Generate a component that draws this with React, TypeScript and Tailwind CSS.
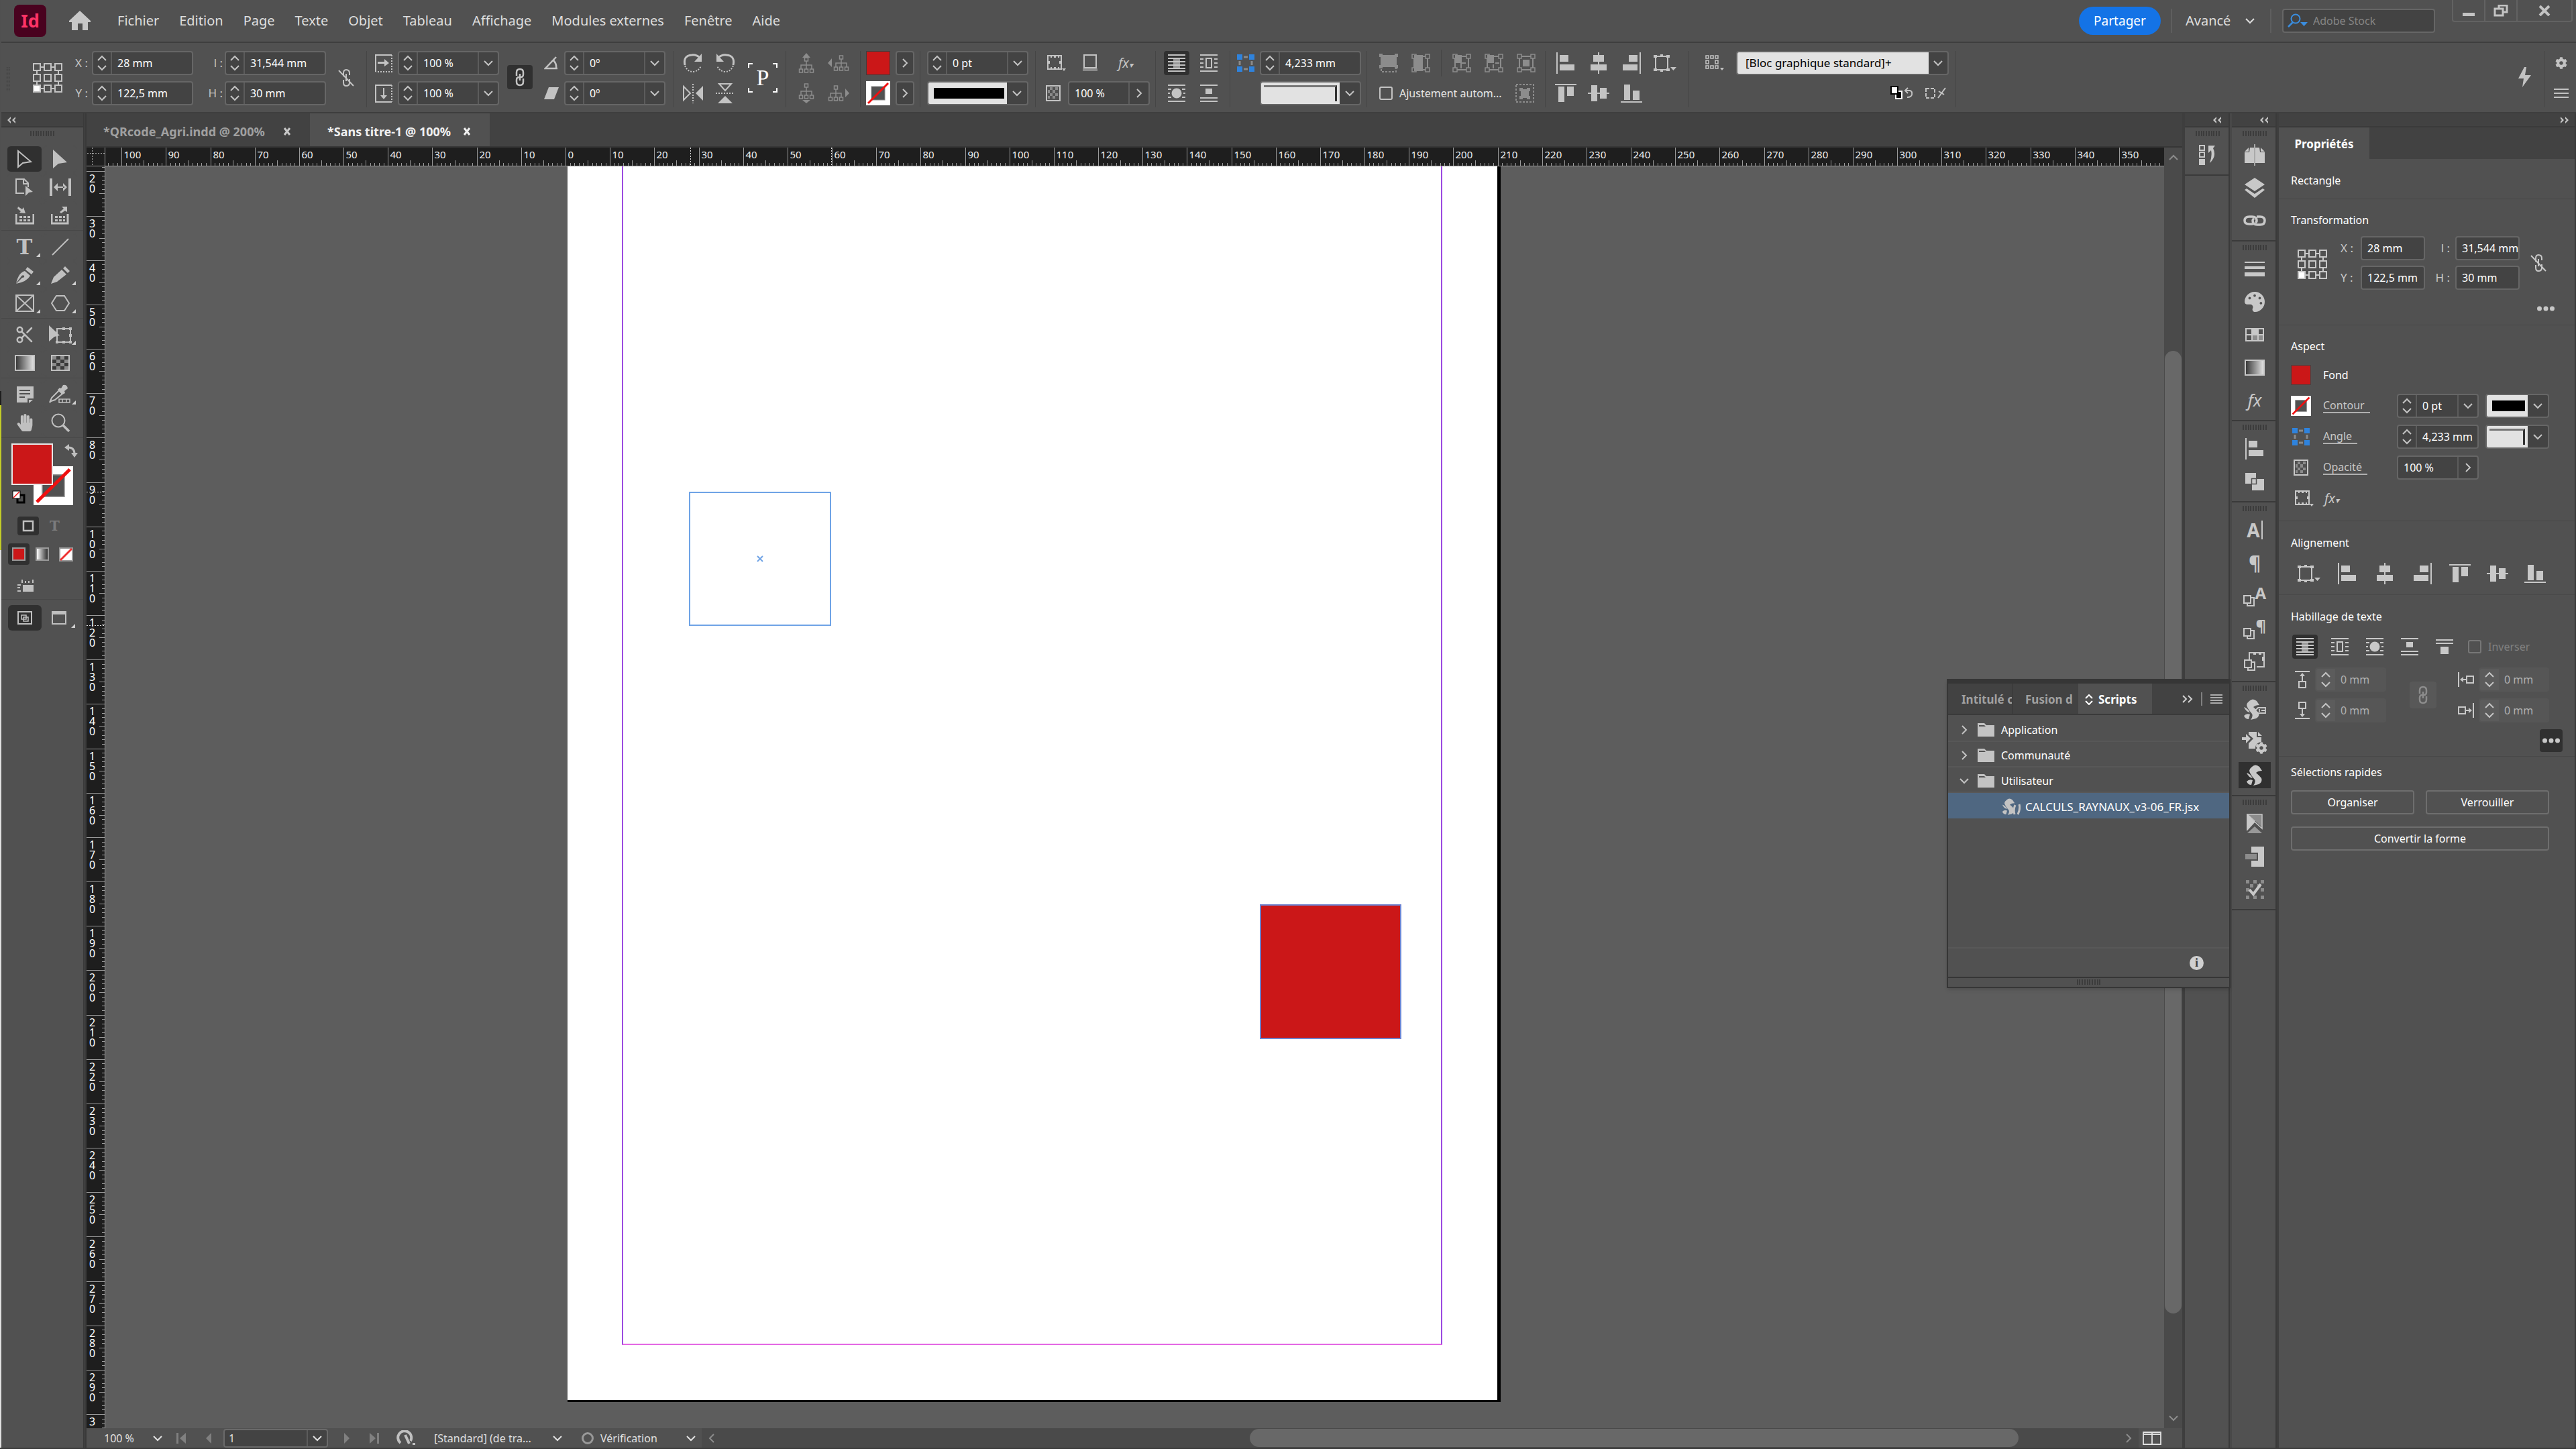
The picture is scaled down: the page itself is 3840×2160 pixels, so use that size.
import React from "react";
import { clsx } from "clsx";
import { Scissors } from "lucide-react";
import { FaHandPaper, FaPalette, FaCog } from "react-icons/fa";

/* ---------- Icon drawings ---------- */

const line = { fill: "none", stroke: "currentColor", strokeWidth: 2 };

const scriptShape = (
  <>
    <path d="M9 3 Q14 -2 20 3 L24 9 Q18 9 15 12 Q20 16 23 20 Q25 26 19 29 L11 31 Q15 26 13 22 Q6 14 5 9 Q6 5 9 3Z" />
    <path d="M1 12 Q6 13 10 20 Q4 19 1 12Z M1 25 Q5 21 10 23 L8 30 Q3 30 1 25Z" />
  </>
);

const stackShape = (
  <>
    <path d="M1 16 H11 V27 H1Z" {...line} />
    <path d="M12 19 H16 V31 H6 V28" {...line} />
  </>
);

const treeShape = (
  <>
    <path d="M12 6 V12 M4 18 V12 H20 V18 M12 12 V18" {...line} strokeWidth={1.5} />
    <path d="M9.5 1 H14.5 V6 H9.5Z M1.5 18 H6.5 V23 H1.5Z M9.5 18 H14.5 V23 H9.5Z M17.5 18 H22.5 V23 H17.5Z" {...line} strokeWidth={1.5} />
  </>
);

const frameShape = (
  <>
    <path d="M4 4 H24 V24 H4Z" {...line} />
    <path d="M1 1 H7 V7 H1Z M21 1 H27 V7 H21Z M1 21 H7 V27 H1Z M21 21 H27 V27 H21Z" {...line} strokeWidth={1.5} fill="#515151" />
  </>
);

const checker = (
  <path d="M2 2h6v5h-6z M14 2h6v5h-6z M8 7h6v5h-6z M20 7h6v5h-6z M2 12h6v5h-6z M14 12h6v5h-6z M8 17h6v5h-6z M20 17h6v5h-6z" opacity=".6" />
);

const icons: Record<string, { w: number; h: number; body: React.ReactNode }> = {
  chevronDown: { w: 16, h: 10, body: <path d="M2 2 L8 8 L14 2" {...line} /> },
  chevronUp: { w: 16, h: 10, body: <path d="M2 8 L8 2 L14 8" {...line} /> },
  chevronRight: { w: 10, h: 16, body: <path d="M2 2 L8 8 L2 14" {...line} /> },
  chevronLeft: { w: 10, h: 16, body: <path d="M8 2 L2 8 L8 14" {...line} /> },
  collapse: { w: 14, h: 10, body: <path d="M6 0 V3 L4 5 L6 7 V10 L1 5Z M13 0 V3 L11 5 L13 7 V10 L8 5Z" /> },
  expand: { w: 14, h: 10, body: <path d="M1 0 V3 L3 5 L1 7 V10 L6 5Z M8 0 V3 L10 5 L8 7 V10 L13 5Z" /> },
  home: { w: 32, h: 30, body: <path d="M16 0 L32 15 V17 H28 V29 H20 V19 H13 V29 H4 V17 H0 V15Z" /> },
  menu: { w: 22, h: 14, body: <path d="M0 1 H22 M0 7 H22 M0 13 H22" {...line} /> },
  listMenu: { w: 18, h: 14, body: <path d="M0 1 H18 M0 5 H18 M0 9 H18 M0 13 H18" {...line} strokeWidth={1.5} /> },
  dots: { w: 26, h: 8, body: <path d="M0 4a3.5 3.5 0 1 0 7 0a3.5 3.5 0 1 0-7 0 M9.5 4a3.5 3.5 0 1 0 7 0a3.5 3.5 0 1 0-7 0 M19 4a3.5 3.5 0 1 0 7 0a3.5 3.5 0 1 0-7 0" /> },
  refGrid: {
    w: 44,
    h: 44,
    body: (
      <>
        <path d="M6 6 H38 M6 38 H38 M6 6 V38 M38 6 V38 M22 6 V10 M22 34 V38" {...line} />
        {[0, 16, 32].map((y) =>
          [0, 16, 32].map((x) => (
            <rect key={`${x}-${y}`} x={x + 1} y={y + 1} width="10" height="10" stroke="currentColor" strokeWidth="2" fill={x === 0 && y === 32 ? "#fff" : "#515151"} />
          ))
        )}
      </>
    ),
  },
  unlink: {
    w: 24,
    h: 28,
    body: (
      <>
        <path d="M8 12 V7 Q8 2 12 2 Q17 2 17 7 V10 M8 17 V21 Q8 26 12 26 Q17 26 17 21 V16 M12 8 V19" {...line} />
        <path d="M1 3 L23 26" {...line} />
      </>
    ),
  },
  link: {
    w: 16,
    h: 28,
    body: <path d="M3 12 V7 Q3 2 8 2 Q13 2 13 7 V10 Q13 14 9 14 M13 16 V21 Q13 26 8 26 Q3 26 3 21 V18 Q3 14 7 14 M8 9 V19" {...line} strokeWidth={2.5} />,
  },
  scaleX: { w: 26, h: 28, body: <><path d="M1 27 V2 H25" {...line} /><path d="M25 2 V27 H1" {...line} strokeDasharray="2 2" /><path d="M4 12 H14 V8 L21 14 L14 19 V15 H4Z" /></> },
  scaleY: { w: 26, h: 28, body: <><path d="M25 2 H1 V27 H25" {...line} /><path d="M25 2 V27" {...line} strokeDasharray="2 2" /><path d="M12 6 H14 V17 H18 L13 23 L8 17 H12Z" /></> },
  angle: { w: 22, h: 20, body: <path d="M18 1 L2 18 H20 M14 6 Q19 11 18 18" {...line} strokeWidth={2.5} /> },
  shear: { w: 22, h: 20, body: <path d="M7 1 H22 L15 19 H0Z" /> },
  rotateCw: { w: 32, h: 30, body: <><path d="M4 18 Q1 4 14 3 Q21 2 26 7" {...line} strokeWidth={3} /><path d="M29 1 V13 H18Z" /><path d="M4 19 Q8 28 16 28 Q25 27 28 19" {...line} strokeDasharray="2 2" /></> },
  rotateCcw: { w: 32, h: 30, body: <><path d="M28 18 Q31 4 18 3 Q11 2 6 7" {...line} strokeWidth={3} /><path d="M3 1 V13 H14Z" /><path d="M28 19 Q24 28 16 28 Q7 27 4 19" {...line} strokeDasharray="2 2" /></> },
  flipH: { w: 32, h: 30, body: <><path d="M2 5 L12 15 L2 25Z" {...line} /><path d="M16 1 V30" {...line} strokeDasharray="2 2" /><path d="M31 4 V26 L20 15Z" /></> },
  flipV: { w: 32, h: 32, body: <><path d="M7 2 H25 L16 12Z" {...line} /><path d="M2 16 H30" {...line} strokeDasharray="2 2" /><path d="M5 31 H27 L16 20Z" /></> },
  corners: { w: 44, h: 44, body: <path d="M1 7 V1 H7 M37 1 H43 V7 M43 37 V43 H37 M7 43 H1 V37" {...line} /> },
  treeUp: { w: 24, h: 30, body: <><path d="M12 0 L18 7 H6Z" /><g transform="translate(0 6)">{treeShape}</g></> },
  treeDown: { w: 24, h: 30, body: <><g>{treeShape}</g><path d="M12 30 L18 25 H6Z" /></> },
  treeLeft: { w: 32, h: 24, body: <><path d="M0 12 L6 5 V18Z" /><g transform="translate(8 0)">{treeShape}</g></> },
  treeRight: { w: 32, h: 24, body: <><path d="M32 12 L26 5 V18Z" /><g>{treeShape}</g></> },
  effectFrame: { w: 28, h: 24, body: <><path d="M1 1 H21 V21 H1Z" {...line} /><path d="M5 2h2v2h-2z M10 2h3v2h-3z M16 2h2v2h-2z M5 18h2v2h-2z M10 18h3v2h-3z M16 18h2v2h-2z M2 9h2v4h-2z M18 9h2v4h-2z M22 20 H28 L25 24Z" /></> },
  shadow: { w: 24, h: 26, body: <><path d="M3 1 H21 V20 H3Z" {...line} /><path d="M1 21 H23 V25 H1Z" opacity=".5" /></> },
  opacity: { w: 22, h: 24, body: <><rect x="1" y="1" width="20" height="22" {...line} /><path d="M6 3h4v4h-4z M14 3h4v4h-4z M3 7h3v5h-3z M10 7h4v5h-4z M6 12h4v4h-4z M14 12h4v4h-4z M3 16h3v4h-3z M10 16h4v4h-4z" opacity=".5" /></> },
  wrapNone: { w: 26, h: 26, body: <><path d="M0 1 H26 M0 6 H26 M0 11 H26 M0 16 H26 M0 21 H26 M0 25 H26" {...line} strokeWidth={1.8} /><path d="M8 5 H18 V22 H8Z" opacity=".7" /></> },
  wrapBox: { w: 26, h: 26, body: <><path d="M0 1 H26 M0 25 H26 M0 7 H5 M21 7 H26 M0 13 H5 M21 13 H26 M0 19 H5 M21 19 H26" {...line} /><path d="M9 6 H17 V20 H9Z" {...line} /></> },
  wrapShape: { w: 26, h: 26, body: <><path d="M0 1 H26 M0 25 H26 M0 7 H5 M21 7 H26 M0 13 H3 M23 13 H26 M0 19 H5 M21 19 H26" {...line} /><circle cx="13" cy="13" r="7.5" /></> },
  wrapJump: { w: 26, h: 26, body: <><path d="M0 1 H26 M0 20 H26 M0 25 H26" {...line} /><path d="M8 6 H18 V14 H8Z" /></> },
  wrapNext: { w: 26, h: 26, body: <><path d="M0 3 H26 M0 8 H26" {...line} /><path d="M7 13 H19 V24 H7Z" /></> },
  cornerBlue: { w: 26, h: 26, body: <><path d="M0 0h8v8h-8z M18 0h8v8h-8z M0 18h8v8h-8z M18 18h8v8h-8z" fill="#2f83dd" /><path d="M10 4 H16 M10 22 H16 M4 10 V16 M22 10 V16" {...line} stroke="#8a8a8a" strokeWidth={3} /></> },
  fitA: { w: 28, h: 28, body: <><path d="M2 2 H26 V20 H2Z" /><path d="M0 0h5v5h-5z M23 0h5v5h-5z M0 17h5v5h-5z M23 17h5v5h-5z" /><path d="M3 23 V27 H25 V22" {...line} strokeDasharray="3 2" /></> },
  fitB: { w: 28, h: 28, body: <>{frameShape}<path d="M4 2 H17 V26 H4Z" /></> },
  fitC: { w: 28, h: 28, body: <>{frameShape}<path d="M4 2 H14 V14 H4Z M14 13 H20 V15 H14Z M12 14 H14 V22 H12Z" /></> },
  fitD: { w: 28, h: 28, body: <>{frameShape}<path d="M4 2 H14 V14 H4Z M16 13 H22 V15 H16Z M12 16 H14 V22 H12Z" /></> },
  fitE: { w: 28, h: 28, body: <>{frameShape}<path d="M9 9 H19 V19 H9Z" /></> },
  fitF: { w: 28, h: 28, body: <><path d="M1 1 H27 V27 H1Z" {...line} strokeDasharray="3 2" /><path d="M6 6h5v2h6v-2h5v5h-2v7h2v5h-5v-2h-6v2h-5v-5h2v-7h-2z" /></> },
  alignLeft: { w: 28, h: 32, body: <><path d="M1 0 V32" {...line} /><path d="M5 4 H18 V14 H5Z M5 18 H27 V27 H5Z" /></> },
  alignCenter: { w: 28, h: 32, body: <><path d="M14 0 V32" {...line} /><path d="M6 4 H22 V14 H6Z M2 18 H26 V27 H2Z" /></> },
  alignRight: { w: 28, h: 32, body: <><path d="M27 0 V32" {...line} /><path d="M10 4 H23 V14 H10Z M1 18 H23 V27 H1Z" /></> },
  alignTop: { w: 32, h: 28, body: <><path d="M0 1 H32" {...line} /><path d="M5 4 H14 V27 H5Z M18 4 H28 V18 H18Z" /></> },
  alignMiddle: { w: 32, h: 28, body: <><path d="M0 14 H32" {...line} /><path d="M5 2 H14 V26 H5Z M18 6 H28 V22 H18Z" /></> },
  alignBottom: { w: 32, h: 28, body: <><path d="M0 27 H32" {...line} /><path d="M5 1 H14 V24 H5Z M18 10 H28 V24 H18Z" /></> },
  alignTo: { w: 36, h: 28, body: <><path d="M5 4 H23 V24 H5Z" {...line} /><path d="M2 2h5v4h-5z M21 2h5v4h-5z M2 22h5v4h-5z M21 22h5v4h-5z M12 1h4v4h-4z M12 23h4v4h-4z M27 20 H36 L31.5 25Z" /></> },
  objStyle: { w: 28, h: 24, body: <><path d="M1 1h4v4h-4z M8 1h4v4h-4z M15 1h4v4h-4z M1 8h4v5h-4z M15 8h4v5h-4z M1 16h4v4h-4z M8 16h4v4h-4z M15 16h4v4h-4z" {...line} strokeWidth={1.5} /><path d="M22 19 H28 L25 23Z" /></> },
  clearA: { w: 36, h: 24, body: <><path d="M9 9 H18 V20 H9Z" fill="#000" stroke="#fff" strokeWidth="2" /><path d="M2 2 H12 V13 H2Z" fill="#fff" stroke="#000" strokeWidth="2" /><path d="M24 8 H30 Q34 9 33 14 Q32 18 26 18 M27 4 L23 8 L27 12" {...line} /></> },
  clearB: { w: 32, h: 24, body: <><path d="M2 5 H15 V19 H2Z" {...line} strokeDasharray="5 2" /><path d="M20 19 L31 4 M21 9 L29 14" {...line} /></> },
  bolt: { w: 20, h: 30, body: <path d="M10 0 L13 0 L11 12 H20 L7 30 L9 17 H1Z" /> },
  magnifier: { w: 30, h: 22, body: <><circle cx="12" cy="8" r="6.5" {...line} /><path d="M8 13 L1 20" {...line} strokeWidth={2.5} /><path d="M19 13 H30 L24.5 19Z" /></> },

  select: { w: 24, h: 28, body: <path d="M2 2 L21 18 L9 20 L2 26Z" {...line} /> },
  direct: { w: 24, h: 28, body: <path d="M1 0 L22 19 L9 21 L1 28Z" /> },
  pageTool: { w: 30, h: 28, body: <><path d="M14 23 H2 V2 H14 L20 8 V14 M13 2 V9 H20" {...line} /><path d="M16 12 L27 21 L21 22 L16 27Z" /></> },
  gapTool: { w: 32, h: 26, body: <path d="M0 0h4v26h-4z M28 0h4v26h-4z M6 13 L12 7 V19Z M26 13 L20 7 V19Z M10 12h12v2h-12z" /> },
  collector: { w: 28, h: 28, body: <><path d="M1 12 V26 H27 V12" {...line} strokeWidth={3} /><path d="M6 15h4v3h-4z M12 15h4v3h-4z M18 15h4v3h-4z M6 20h4v3h-4z M12 20h4v3h-4z M18 20h4v3h-4z M4 1 L10 5 L12 2 L15 11 L6 10 L8 8 L3 4Z" /></> },
  placer: { w: 28, h: 28, body: <><path d="M1 12 V26 H25 V12" {...line} strokeWidth={3} /><path d="M6 15h4v3h-4z M12 15h4v3h-4z M18 15h3v3h-3z M6 20h4v3h-4z M12 20h4v3h-4z M18 20h3v3h-3z M24 1 V9 L21 7 L15 11 L13 9 L19 4 L16 1Z" /></> },
  lineTool: { w: 28, h: 28, body: <path d="M2 26 L26 2" {...line} /> },
  pen: { w: 28, h: 28, body: <path d="M18 2 L27 9 L24 13 L15 6Z M14 8 L22 15 Q17 24 1 27 L10 18 Q14 18 13 15 Q10 13 8 17 L1 26 Q5 10 14 8Z" /> },
  pencil: { w: 28, h: 28, body: <path d="M21 1 L28 8 L25 11 L18 4Z M16 6 L23 13 L9 24 L0 27 L4 17Z" /> },
  frameTool: { w: 28, h: 26, body: <path d="M1 1 H27 V25 H1Z M1 1 L27 25 M27 1 L1 25" {...line} /> },
  polygon: { w: 30, h: 26, body: <path d="M2 13 L9 2 H21 L28 13 L21 24 H9Z" {...line} /> },
  freeTransform: { w: 34, h: 28, body: <><path d="M12 5 H32 V25 H12Z" {...line} /><path d="M20 3h4v4h-4z M20 23h4v4h-4z M30 3h4v4h-4z M30 13h4v4h-4z M30 23h4v4h-4z M10 23h4v4h-4z" /><path d="M0 0 L16 15 L8 17 L0 24Z" /></> },
  gradientTool: {
    w: 30,
    h: 24,
    body: (
      <>
        <defs>
          <linearGradient id="tool-gradient">
            <stop offset="0" stopColor="#333" />
            <stop offset="1" stopColor="#e8e8e8" />
          </linearGradient>
        </defs>
        <rect x="1" y="1" width="28" height="22" fill="url(#tool-gradient)" stroke="currentColor" strokeWidth="2" />
      </>
    ),
  },
  feather: { w: 28, h: 24, body: <><rect x="1" y="1" width="26" height="22" fill="#3a3a3a" stroke="currentColor" strokeWidth="2" />{checker}</> },
  note: { w: 26, h: 26, body: <path fillRule="evenodd" d="M1 1 H26 V19 H17 V25 H1Z M5 6 V8 H21 V6Z M5 11 V13 H21 V11Z M5 16 V18 H13 V16Z M19 21 H25 L19 26Z" /> },
  eyedropper: { w: 36, h: 30, body: <><path d="M4 25 L2 27 L5 20 L16 9 L21 14 L10 23Z" {...line} /><path d="M22 1 Q28 0 29 6 L24 10 L25 13 L21 15 L14 8 L17 5 L19 6Z" /><path d="M16 22 H32 V27 H16Z M21 22 V27 M27 22 V27" {...line} strokeWidth={1.5} /></> },
  zoom: { w: 30, h: 30, body: <><circle cx="12" cy="12" r="9.5" {...line} /><path d="M19 19 L28 28" {...line} strokeWidth={3.5} /></> },
  swap: { w: 20, h: 22, body: <><path d="M6 6 Q14 6 15 14" {...line} strokeWidth={3} /><path d="M0 6 L7 1 V11Z M10 14 H20 L15 21Z" /></> },
  rulerIcon: { w: 26, h: 22, body: <><path d="M8 10 H24 V20 H8Z" /><path d="M7 7 V2 M12 7 V4 M17 7 V4 M23 7 V2 M0 10 H5 M0 14 H4 M0 19 H5" {...line} /></> },
  viewA: { w: 22, h: 20, body: <><rect x="1" y="1" width="20" height="18" {...line} /><path d="M6 6 H13 V12 H6Z M9 9 H16 V15 H9Z" {...line} strokeWidth={1.5} /></> },
  viewB: { w: 22, h: 20, body: <><rect x="1" y="1" width="20" height="18" {...line} /><path d="M0 0 H22 V5 H0Z" /></> },
  formatBox: { w: 18, h: 18, body: <rect x="2" y="2" width="14" height="14" {...line} strokeWidth={2.5} /> },

  history: { w: 28, h: 32, body: <><path d="M2 2 H9 V9 H2Z M2 12 H9 V19 H2Z" {...line} /><path d="M1 22h9v9h-9z" /><path d="M15 2 H25 L22 6 Q28 18 17 28 Q21 17 19 9 L15 13Z" /></> },
  pages: { w: 30, h: 32, body: <><path d="M8 5 H14 V28 H0 V12 H7Z M22 5 H16 V28 H30 V12 H23Z M6 5 V11 H0Z M24 5 V11 H30Z" /><path d="M15 0 V32" {...line} strokeWidth={1.5} /></> },
  layers: { w: 30, h: 30, body: <path d="M15 0 L30 10 L15 20 L0 10Z M0 18 L3 16 L15 24 L27 16 L30 18 L15 30Z" /> },
  chain: { w: 34, h: 18, body: <path d="M14 14 H9 Q2 14 2 9 Q2 3 9 3 H13 Q20 3 20 9 Q20 11 18 12 M20 3 H25 Q32 3 32 9 Q32 15 25 15 H21 Q14 15 14 9 Q14 7 16 6" {...line} strokeWidth={3.5} /> },
  strokes: { w: 30, h: 24, body: <path d="M0 1h30v2h-30z M0 8h30v4h-30z M0 17h30v6h-30z" /> },
  swatches: { w: 28, h: 20, body: <><path d="M1 1 H27 V19 H1Z M1 10 H27 M10 1 V19 M19 1 V19" {...line} /><path d="M10 1h9v9h-9z" /><path d="M10 10h17v9h-17z" opacity=".5" /></> },
  pathfinder: { w: 28, h: 26, body: <><path d="M0 0 H16 V16 H0Z" /><path d="M10 9 H28 V26 H10Z" /><path d="M9.5 8.5 H16.5 V16.5 H9.5Z" fill="none" stroke="#515151" strokeWidth="1.5" /></> },
  stackLow: { w: 34, h: 32, body: stackShape },
  frameStyle: { w: 32, h: 30, body: <><path d="M8 12 V2 H30 V23 H19" {...line} /><path d="M14 2h4v3h-4z M22 2h4v3h-4z M27 8h3v6h-3z" /><g transform="translate(0 -3)">{stackShape}</g></> },
  scriptLabel: { w: 34, h: 32, body: <>{scriptShape}<path d="M18 17 L22 13 H33 V21 H22Z M24 15 V19 M27 17 H33" fill="#515151" stroke="currentColor" strokeWidth="1.8" /></> },
  scriptSettings: { w: 38, h: 34, body: <path d="M0 9 H6 V4 L13 11 L6 18 V13 H0Z M10 1 H22 V9 H29 V16 Q22 17 21 26 H10 V18 L17 11 L10 5Z M24 1 L30 7 H24Z" /> },
  script: { w: 26, h: 32, body: scriptShape },
  scriptFile: { w: 28, h: 32, body: <><g transform="translate(0 3) scale(.8)">{scriptShape}</g><path d="M20 13 Q17 19 19 27 M26 12 Q28 19 24 27" {...line} strokeWidth={3} /></> },
  xframe: { w: 24, h: 30, body: <><path d="M1 1 H23 V20 L12 10 L1 20Z" opacity=".5" /><path d="M0 0 L12 11 L0 23Z M1 1 H23 V22 L12 12 L1 24Z" {...line} strokeWidth={1.5} /><path d="M0 0 L12 12 L0 24Z" /><path d="M12 19 L23 29 H1Z" opacity=".6" /></> },
  article: { w: 28, h: 30, body: <><path d="M9 0 H28 V30 H9 V21 H19 V9 H9Z" /><path d="M0 11h17v8h-17z" opacity=".5" /></> },
  preflight: { w: 28, h: 28, body: <><path d="M1 0h5v5h-5z M12 0h5v5h-5z M23 0h5v5h-5z M7 6h5v5h-5z M18 6h5v5h-5z M1 12h5v5h-5z M23 12h5v5h-5z M1 23h5v5h-5z M12 23h5v5h-5z M23 23h5v5h-5z" opacity=".5" /><path d="M6 14 L12 21 L23 6" {...line} strokeWidth={4} /></> },
  folder: { w: 26, h: 22, body: <path fillRule="evenodd" d="M0 1 H10 L13 4 H25 V21 H0Z M2 4 V6 H12 L10 4Z" /> },
  offTop: { w: 22, h: 28, body: <><path d="M0 2 H22 M6 17 H16 V26 H6Z M11 16 V6" {...line} /><path d="M11 4 L15 9 H7Z" /></> },
  offBottom: { w: 22, h: 28, body: <><path d="M0 26 H22 M6 2 H16 V11 H6Z M11 12 V22" {...line} /><path d="M11 24 L15 19 H7Z" /></> },
  offLeft: { w: 26, h: 24, body: <><path d="M2 1 V23 M14 7 H24 V17 H14Z M13 12 H6" {...line} /><path d="M4 12 L9 8 V16Z" /></> },
  offRight: { w: 26, h: 24, body: <><path d="M24 1 V23 M2 7 H12 V17 H2Z M13 12 H20" {...line} /><path d="M22 12 L17 8 V16Z" /></> },
  first: { w: 14, h: 16, body: <path d="M0 0h3v16h-3z M14 0 V16 L5 8Z" /> },
  prev: { w: 8, h: 16, body: <path d="M8 0 V16 L0 8Z" /> },
  next: { w: 8, h: 16, body: <path d="M0 0 V16 L8 8Z" /> },
  last: { w: 14, h: 16, body: <path d="M0 0 V16 L9 8Z M11 0h3v16h-3z" /> },
  cloud: { w: 30, h: 24, body: <><path d="M6 19 A10 10 0 1 1 21 16 M13 7 L19 20" {...line} strokeWidth={4} /><path d="M24 19h4v3h-4z" /></> },
  split: { w: 28, h: 20, body: <path d="M1 1 H27 V19 H1Z M1 4 H27 M14 1 V19" {...line} strokeWidth={1.8} /> },
  updown: { w: 12, h: 16, body: <path d="M1 6 L6 1 L11 6 M1 10 L6 15 L11 10" {...line} /> },
  restore: { w: 22, h: 18, body: <path d="M8 6 V1 H20 V11 H15 M2 6 H14 V16 H2Z" {...line} strokeWidth={3} /> },
  close: { w: 18, h: 16, body: <path d="M2 1 L16 15 M16 1 L2 15" {...line} strokeWidth={4} /> },
};

function Icon({ name, className = "" }: { name: string; className?: string }) {
  const { w, h, body } = icons[name];
  return (
    <svg width={w} height={h} viewBox={`0 0 ${w} ${h}`} fill="currentColor" className={clsx("shrink-0", className)} aria-hidden="true">
      {body}
    </svg>
  );
}

/* ---------- Small shared controls ---------- */

interface FieldProps {
  label: string;
  value: string;
  className?: string;
  spin?: boolean;
  drop?: "chevronDown" | "chevronRight";
  muted?: boolean;
}

function Field({ label, value, className = "", spin = false, drop, muted = false }: FieldProps) {
  return (
    <div className={clsx("flex h-9 shrink-0 overflow-hidden rounded border-2", muted ? "border-[#565656] bg-[#565656] text-[#b0b0b0]" : "border-[#666] bg-[#434343] text-white", className)}>
      {spin && (
        <div className={clsx("flex w-7 shrink-0 flex-col items-center justify-between py-1 text-[#c3c3c3]", muted ? "bg-[#5c5c5c]" : "border-r-2 border-[#5c5c5c]")}>
          <button aria-label={`${label} +`}><Icon name="chevronUp" /></button>
          <button aria-label={`${label} -`}><Icon name="chevronDown" /></button>
        </div>
      )}
      <input aria-label={label} defaultValue={value} className="w-0 min-w-0 flex-1 bg-transparent pl-2 text-base outline-none" />
      {drop && (
        <button aria-label={`${label} menu`} className="flex w-[30px] shrink-0 items-center justify-center border-l-2 border-[#5c5c5c] text-[#c3c3c3]">
          <Icon name={drop} />
        </button>
      )}
    </div>
  );
}

function StrokeStyle({ kind, className }: { kind: "solid" | "corner"; className: string }) {
  return (
    <button aria-label={kind} className={clsx("flex h-9 shrink-0 overflow-hidden rounded border-2 border-[#666] bg-[#434343]", className)}>
      <span className="flex h-full flex-1 bg-[#e2e2e2] p-1">
        {kind === "solid" ? (
          <span className="my-1 ml-1 flex-1 self-stretch bg-black" />
        ) : (
          <span className="flex-1 self-stretch border-t-3 border-r-3 border-t-[#777] border-r-[#333]" />
        )}
      </span>
      <span className="flex h-full w-[30px] items-center justify-center text-[#c3c3c3]">
        <Icon name="chevronDown" />
      </span>
    </button>
  );
}

function NoneSwatch({ className }: { className: string }) {
  return (
    <svg viewBox="0 0 36 36" preserveAspectRatio="none" className={clsx("shrink-0", className)} aria-hidden="true">
      <rect width="36" height="36" fill="#fff" />
      <rect x="8" y="8" width="20" height="20" fill="#515151" stroke="#888" />
      <path d="M3 33 L33 3" stroke="#f01010" strokeWidth="3" />
    </svg>
  );
}

function Grip() {
  return (
    <div className="flex h-2 w-9 justify-between">
      {Array.from({ length: 10 }, (_, i) => (
        <span key={i} className="h-2 w-[2px] bg-[#3c3c3c]" />
      ))}
    </div>
  );
}

const Divider = ({ className = "" }: { className?: string }) => <div className={clsx("h-[84px] w-px shrink-0 bg-[#454545]", className)} />;

const IconButton = ({ name, className = "" }: { name: string; className?: string }) => (
  <button aria-label={name} className={clsx("flex h-9 shrink-0 items-center justify-center", className)}>
    <Icon name={name} />
  </button>
);

/* ---------- Title bar ---------- */

const menus = ["Fichier", "Edition", "Page", "Texte", "Objet", "Tableau", "Affichage", "Modules externes", "Fenêtre", "Aide"];

function TitleBar() {
  return (
    <header className="flex h-16 items-center border-b-2 border-[#3e3e3e] pl-[19px] text-[19px] text-[#dedede]">
      <div className="flex h-12 w-12 shrink-0 items-center justify-center rounded-lg bg-[#49021f] text-[27px] font-bold text-[#ff3366]">Id</div>
      <button aria-label="Accueil" className="ml-[34px] text-[#c8c8c8]"><Icon name="home" /></button>
      <nav className="ml-10 flex gap-[30px] text-xl">
        {menus.map((m) => (
          <button key={m} className="whitespace-nowrap">{m}</button>
        ))}
      </nav>
      <div className="flex-1" />
      <button className="h-[42px] w-[122px] rounded-full bg-[#1473e6] text-[19px] text-white">Partager</button>
      <div className="ml-[15px] h-9 w-[2px] bg-[#5e5e5e]" />
      <div className="ml-5 flex w-[106px] items-center">
        <select aria-label="Espace de travail" className="w-[88px] appearance-none bg-transparent text-xl outline-none">
          <option>Avancé</option>
        </select>
        <Icon name="chevronDown" />
      </div>
      <div className="ml-5 h-9 w-[2px] bg-[#5e5e5e]" />
      <label className="ml-4 flex h-9 w-[228px] items-center rounded border-2 border-[#666] bg-[#434343] pl-1.5 text-[#3a8ee0]">
        <Icon name="magnifier" />
        <input aria-label="Adobe Stock" placeholder="Adobe Stock" className="ml-2 w-0 flex-1 bg-transparent text-base outline-none placeholder:text-[#858585]" />
      </label>
      <div className="mr-[5px] ml-[25px] flex h-[33px] self-start rounded-b border-2 border-t-0 border-[#626262] text-[#c3c3c3]">
        <button aria-label="Réduire" className="flex w-12 items-center justify-center border-r-2 border-[#626262]"><span className="mt-3 h-[5px] w-[18px] bg-[#c3c3c3]" /></button>
        <button aria-label="Restaurer" className="flex w-12 items-center justify-center border-r-2 border-[#626262]"><Icon name="restore" /></button>
        <button aria-label="Fermer" className="flex w-20 items-center justify-center"><Icon name="close" /></button>
      </div>
    </header>
  );
}

/* ---------- Control bar ---------- */

function ControlBar() {
  const col = "flex shrink-0 flex-col gap-[9px]";
  const lab = "flex h-9 items-center justify-end text-[17px]";
  return (
    <div className="flex h-[105px] items-start border-b-2 border-[#3e3e3e] pt-3 text-[#c3c3c3]">
      <div className="mt-6 ml-2 h-9 w-1 shrink-0 border-x border-dotted border-[#333]" />
      <Icon name="refGrid" className="mt-[18px] ml-[35px]" />
      <div className={clsx(col, "ml-3.5 w-6")}><span className={lab}>X :</span><span className={lab}>Y :</span></div>
      <div className={clsx(col, "ml-1.5")}>
        <Field label="X" value="28 mm" spin className="w-[151px]" />
        <Field label="Y" value="122,5 mm" spin className="w-[151px]" />
      </div>
      <div className={clsx(col, "ml-4 w-7")}><span className={lab}>l :</span><span className={lab}>H :</span></div>
      <div className={clsx(col, "ml-[3px]")}>
        <Field label="Largeur" value="31,544 mm" spin className="w-[151px]" />
        <Field label="Hauteur" value="30 mm" spin className="w-[151px]" />
      </div>
      <IconButton name="unlink" className="mt-[22px] ml-[18px] w-6" />
      <Divider className="ml-[18px]" />
      <div className={clsx(col, "ml-3 w-[26px]")}><IconButton name="scaleX" /><IconButton name="scaleY" /></div>
      <div className={clsx(col, "ml-2")}>
        <Field label="Echelle X" value="100 %" spin drop="chevronDown" className="w-[151px]" />
        <Field label="Echelle Y" value="100 %" spin drop="chevronDown" className="w-[151px]" />
      </div>
      <IconButton name="link" className="mt-[21px] ml-3 w-[38px] rounded bg-[#303030]" />
      <div className={clsx(col, "ml-[17px] w-[22px]")}><IconButton name="angle" /><IconButton name="shear" /></div>
      <div className={clsx(col, "ml-2")}>
        <Field label="Rotation" value="0º" spin drop="chevronDown" className="w-[151px]" />
        <Field label="Inclinaison" value="0º" spin drop="chevronDown" className="w-[151px]" />
      </div>
      <Divider className="ml-3" />
      <div className="ml-3 grid shrink-0 grid-cols-2 gap-x-4 gap-y-[9px]">
        <IconButton name="rotateCw" /><IconButton name="rotateCcw" />
        <IconButton name="flipH" /><IconButton name="flipV" />
      </div>
      <div className="mt-[18px] ml-[18px] grid shrink-0 place-items-center text-white">
        <Icon name="corners" className="col-start-1 row-start-1" />
        <span className="col-start-1 row-start-1 font-['Liberation_Serif'] text-[34px] leading-none">P</span>
      </div>
      <Divider className="ml-3" />
      <div className="ml-[18px] grid shrink-0 grid-cols-[24px_32px] gap-x-5 gap-y-[9px] text-[#8c8c8c]">
        <IconButton name="treeUp" /><IconButton name="treeLeft" />
        <IconButton name="treeDown" /><IconButton name="treeRight" />
      </div>
      <Divider className="ml-4" />
      <div className={clsx(col, "ml-2")}>
        <button aria-label="Fond" className="h-9 w-9 border border-[#3e3e3e] bg-[#cb1718]" />
        <button aria-label="Contour"><NoneSwatch className="h-9 w-9" /></button>
      </div>
      <div className={clsx(col, "ml-2")}>
        <IconButton name="chevronRight" className="w-7 rounded border-2 border-[#666] bg-[#434343]" />
        <IconButton name="chevronRight" className="w-7 rounded border-2 border-[#666] bg-[#434343]" />
      </div>
      <Divider className="ml-2" />
      <div className={clsx(col, "ml-2.5")}>
        <Field label="Epaisseur" value="0 pt" spin drop="chevronDown" className="w-[151px]" />
        <StrokeStyle kind="solid" className="w-[151px]" />
      </div>
      <Divider className="ml-2.5" />
      <div className={clsx(col, "ml-[13px] w-[156px]")}>
        <div className="flex h-9 items-center gap-6 pl-1">
          <Icon name="effectFrame" />
          <Icon name="shadow" />
          <span className="ml-1.5 text-xl italic">fx<span className="text-xs">▾</span></span>
        </div>
        <div className="flex items-center gap-[11px] pl-0.5">
          <Icon name="opacity" />
          <Field label="Opacité" value="100 %" drop="chevronRight" className="w-[122px]" />
        </div>
      </div>
      <Divider className="ml-[9px]" />
      <div className="ml-3 grid shrink-0 grid-cols-2 gap-x-2.5 gap-y-[9px]">
        <IconButton name="wrapNone" className="w-[38px] rounded bg-[#303030]" /><IconButton name="wrapBox" />
        <IconButton name="wrapShape" className="w-[38px]" /><IconButton name="wrapJump" className="w-[38px]" />
      </div>
      <Divider className="ml-3" />
      <IconButton name="cornerBlue" className="ml-2.5" />
      <div className={clsx(col, "ml-2")}>
        <Field label="Angle" value="4,233 mm" spin className="w-[151px]" />
        <StrokeStyle kind="corner" className="w-[151px]" />
      </div>
      <Divider className="ml-2" />
      <div className={clsx(col, "ml-[18px] text-[#8c8c8c]")}>
        <div className="flex h-9 items-center">
          <Icon name="fitA" />
          <Icon name="fitB" className="ml-5" />
          <div className="mx-4 h-10 w-px bg-[#454545]" />
          <Icon name="fitC" />
          <Icon name="fitD" className="ml-5" />
          <Icon name="fitE" className="ml-5" />
        </div>
        <div className="flex h-9 items-center">
          <label className="flex w-[203px] items-center gap-2.5 text-base whitespace-nowrap text-[#e6e6e6]">
            <input type="checkbox" className="h-5 w-5 appearance-none rounded-[3px] border-2 border-[#c3c3c3]" />
            Ajustement autom...
          </label>
          <Icon name="fitF" />
        </div>
      </div>
      <Divider className="ml-3.5" />
      <div className="ml-3 grid shrink-0 grid-cols-[36px_36px_36px_36px] gap-x-[13px] gap-y-[9px]">
        <IconButton name="alignLeft" /><IconButton name="alignCenter" /><IconButton name="alignRight" /><IconButton name="alignTo" />
        <IconButton name="alignTop" /><IconButton name="alignMiddle" /><IconButton name="alignBottom" />
      </div>
      <Divider className="ml-[18px]" />
      <IconButton name="objStyle" className="ml-6" />
      <div className={clsx(col, "ml-[18px] items-end")}>
        <div className="flex h-9 w-[317px] items-center overflow-hidden rounded border-2 border-[#666] bg-[#434343]">
          <select aria-label="Style d'objet" className="h-full flex-1 appearance-none bg-[#e2e2e2] pl-3 text-[17px] text-black outline-none">
            <option>[Bloc graphique standard]+</option>
          </select>
          <span className="flex w-7 justify-center"><Icon name="chevronDown" /></span>
        </div>
        <div className="flex h-9 items-center gap-4 pr-1"><Icon name="clearA" /><Icon name="clearB" /></div>
      </div>
      <Divider className="ml-2.5" />
      <div className="flex-1" />
      <IconButton name="bolt" className="mt-[21px]" />
      <Divider className="ml-[19px]" />
      <div className={clsx(col, "mr-[11px] ml-3.5")}>
        <button aria-label="Réglages" className="flex h-9 items-center justify-center"><FaCog size={18} /></button>
        <IconButton name="menu" />
      </div>
    </div>
  );
}

/* ---------- Toolbox ---------- */

const toolGroups: string[][] = [
  ["select", "direct", "pageTool", "gapTool", "collector", "placer"],
  ["type", "lineTool", "pen", "pencil", "frameTool", "polygon"],
  ["scissors", "freeTransform", "gradientTool", "feather"],
  ["note", "eyedropper", "hand", "zoom"],
];

const nested = ["type", "pen", "pencil", "frameTool", "polygon", "freeTransform", "eyedropper"];

function ToolGlyph({ name }: { name: string }) {
  if (name === "type") return <span className="font-['DejaVu_Serif'] text-[32px] leading-none font-bold">T</span>;
  if (name === "scissors") return <Scissors size={30} strokeWidth={2} className="rotate-180 -scale-x-100" />;
  if (name === "hand") return <FaHandPaper size={26} />;
  return <Icon name={name} />;
}

function Toolbox() {
  return (
    <aside className="flex w-[122px] shrink-0 flex-col bg-[#515151] text-[#c0c0c0]">
      <div className="flex h-[21px] items-center border-b-2 border-[#3a3a3a] bg-[#424242] pl-2"><Icon name="collapse" /></div>
      <div className="flex h-[23px] justify-center pt-[5px]"><Grip /></div>
      {toolGroups.map((tools, i) => (
        <div key={i} className="grid grid-cols-2 gap-x-0.5 border-b border-[#484848] pt-[3px] pr-[9px] pb-px pl-[9px]">
          {tools.map((t) => (
            <button key={t} aria-label={t} className={clsx("relative flex h-[42px] items-center justify-center rounded-md border-y-2 border-[#515151]", t === "select" && "bg-[#303030]")}>
              <ToolGlyph name={t} />
              {nested.includes(t) && <span className="absolute right-0.5 bottom-1 border-b-6 border-l-6 border-b-[#d0d0d0] border-l-transparent" />}
            </button>
          ))}
        </div>
      ))}
      <div className="relative h-[117px]">
        <button aria-label="Contour" className="absolute top-[42px] left-12"><NoneSwatch className="h-[58px] w-[59px]" /></button>
        <button aria-label="Fond" className="absolute top-2 left-[15px] h-[62px] w-[62px] border-2 border-[#e8e8e8] bg-[#cb1718]" />
        <Icon name="swap" className="absolute top-2 left-[94px]" />
        <svg width="20" height="20" viewBox="0 0 20 20" className="absolute top-[78px] left-4" aria-hidden="true">
          <path d="M8 7 H18 V18 H8Z" fill="#515151" stroke="#000" strokeWidth="3" />
          <rect x="1" y="1" width="11" height="11" fill="#fff" stroke="#000" />
          <path d="M2 11 L11 2" stroke="#f01010" strokeWidth="1.5" />
        </svg>
      </div>
      <div className="flex h-7 items-center pl-6">
        <button aria-label="Objet" className="flex h-7 w-8 items-center justify-center rounded bg-[#303030]"><Icon name="formatBox" /></button>
        <span className="ml-4 font-['DejaVu_Serif'] text-xl leading-none font-bold text-[#7c7c7c]">T</span>
      </div>
      <div className="mt-3 flex h-8 items-center gap-[15px] pl-2.5">
        <button aria-label="Couleur" className="flex h-8 w-8 items-center justify-center rounded bg-[#303030]"><span className="h-5 w-5 border-2 border-[#999] bg-[#cb1718]" /></button>
        <span className="-ml-1.5 h-5 w-5 border-2 border-[#999] bg-linear-to-r from-white to-[#333]" />
        <svg width="21" height="21" viewBox="0 0 21 21" aria-hidden="true"><rect x="1" y="1" width="19" height="19" fill="#fff" stroke="#999" strokeWidth="2" /><path d="M2 19 L19 2" stroke="#e33" strokeWidth="3" /></svg>
      </div>
      <div className="mt-5 h-8 border-b border-[#484848] pl-6"><Icon name="rulerIcon" /></div>
      <div className="mt-2 flex items-center pl-2.5">
        <button aria-label="Mode" className="flex h-[38px] w-[50px] items-center justify-center rounded-md bg-[#303030]"><Icon name="viewA" /></button>
        <button aria-label="Ecran" className="relative flex h-[38px] w-[52px] items-center justify-center">
          <Icon name="viewB" />
          <span className="absolute right-0.5 bottom-1 border-b-6 border-l-6 border-b-[#d0d0d0] border-l-transparent" />
        </button>
      </div>
    </aside>
  );
}

/* ---------- Rulers ---------- */

const MM = 6.617; // pixels per millimetre at 100 %

function HorizontalRuler() {
  const zero = 686;
  const ticks: string[] = [];
  const labels: { x: number; n: number }[] = [];
  for (let mm = -103; mm < 360; mm++) {
    const x = Math.round(zero + mm * MM) + 0.5;
    ticks.push(`M${x} ${mm % 10 === 0 ? 0 : mm % 5 === 0 ? 19 : 23}V28`);
    if (mm % 10 === 0) labels.push({ x: x + 3, n: Math.abs(mm) });
  }
  return (
    <svg className="h-7 w-0 flex-1 bg-[#1e1e1e]" aria-hidden="true">
      <path d={ticks.join("")} stroke="#9a9a9a" />
      <path d="M872.5 0V28 M1082.5 0V28" stroke="#ddd" strokeDasharray="2 2" />
      <rect y="27" width="100%" height="1" fill="#9a9a9a" />
      {labels.map(({ x, n }) => (
        <text key={x} x={x} y="16" fontSize="15" fill="#f0f0f0">{n}</text>
      ))}
    </svg>
  );
}

function VerticalRuler() {
  const zero = -125;
  const ticks: string[] = [];
  const digits: { y: number; c: string }[] = [];
  for (let mm = 19; mm < 310; mm++) {
    const y = Math.round(zero + mm * MM) + 0.5;
    ticks.push(`M${mm % 10 === 0 ? 0 : mm % 5 === 0 ? 19 : 23} ${y}H28`);
    // the last label has room for its first digit only
    const label = mm < 300 ? String(mm) : String(mm).charAt(0);
    if (mm % 10 === 0) label.split("").forEach((c, i) => digits.push({ y: y + 16 + i * 15, c }));
  }
  return (
    <svg className="w-7 shrink-0 bg-[#1e1e1e]" aria-hidden="true">
      <path d={ticks.join("")} stroke="#9a9a9a" />
      <path d="M0 485.5H28 M0 684.5H28" stroke="#ddd" strokeDasharray="2 2" />
      <rect x="27" width="1" height="100%" fill="#9a9a9a" />
      {digits.map(({ y, c }) => (
        <text key={y} x="4" y={y} fontSize="16" fill="#fff">{c}</text>
      ))}
    </svg>
  );
}

/* ---------- Document ---------- */

function Canvas() {
  return (
    <main className="relative flex-1 overflow-hidden bg-[#5d5d5d]">
      <div className="absolute top-0 left-[689px] h-[1842px] w-[1391px] border-r-5 border-b-3 border-black bg-white" />
      <div className="absolute top-0 left-[770px] h-[1757px] w-[1223px] border-x-2 border-b-2 border-x-[#9b4be0] border-b-[#e468e4]" />
      <div className="absolute top-[485px] left-[870px] flex h-[200px] w-[212px] items-center justify-center border-2 border-[#6fa3e6]">
        <svg width="10" height="10" viewBox="0 0 10 10" aria-hidden="true"><path d="M1 1 L9 9 M9 1 L1 9" stroke="#6fa3e6" strokeWidth="2" /></svg>
      </div>
      <div className="absolute top-[1100px] left-[1721px] h-[201px] w-[211px] border-2 border-[#6f83cf] bg-[#cb1718]" />
    </main>
  );
}

function DocumentTabs() {
  return (
    <div className="flex h-[51px] shrink-0 border-b-2 border-[#363636] bg-[#424242] text-lg font-bold">
      <div className="flex w-[333px] items-center justify-between pt-1 pr-7 pl-[25px] text-[#a0a0a0]">
        <button>*QRcode_Agri.indd @ 200%</button>
        <button aria-label="Fermer l'onglet"><svg width="12" height="12" viewBox="0 0 12 12"><path d="M2 1 L10 11 M10 1 L2 11" stroke="#c8c8c8" strokeWidth="3" /></svg></button>
      </div>
      <div className="flex w-[268px] items-center justify-between bg-[#515151] pt-1 pr-7 pl-[26px] text-[#f0f0f0]">
        <button>*Sans titre-1 @ 100%</button>
        <button aria-label="Fermer l'onglet"><svg width="12" height="12" viewBox="0 0 12 12"><path d="M2 1 L10 11 M10 1 L2 11" stroke="#f0f0f0" strokeWidth="3" /></svg></button>
      </div>
    </div>
  );
}

function StatusBar() {
  return (
    <footer className="flex h-[29px] shrink-0 items-center text-base text-[#e0e0e0]">
      <select aria-label="Zoom" className="ml-[26px] w-[72px] appearance-none bg-transparent outline-none"><option>100 %</option></select>
      <Icon name="chevronDown" />
      <div className="ml-5 flex items-center gap-[30px] text-[#808080]"><Icon name="first" /><Icon name="prev" /></div>
      <div className="ml-[18px] flex h-7 w-[156px] rounded border-2 border-[#6a6a6a] bg-[#434343]">
        <input aria-label="Page" defaultValue="1" className="w-0 flex-1 bg-transparent pl-1.5 outline-none" />
        <button aria-label="Pages" className="flex w-[30px] items-center justify-center border-l-2 border-[#5c5c5c]"><Icon name="chevronDown" /></button>
      </div>
      <div className="ml-6 flex items-center gap-[30px] text-[#808080]"><Icon name="next" /><Icon name="last" /></div>
      <Icon name="cloud" className="ml-[26px] text-[#c0c0c0]" />
      <select aria-label="Profil" className="ml-[26px] w-[176px] appearance-none bg-transparent outline-none"><option>[Standard] (de tra...</option></select>
      <Icon name="chevronDown" />
      <span className="ml-7 h-[18px] w-[18px] rounded-full border-3 border-[#999]" />
      <button className="ml-2.5 w-[127px] text-left">Vérification</button>
      <Icon name="chevronDown" />
      <div className="ml-2 flex h-full flex-1 items-center bg-[#4a4a4a] text-[#8c8c8c]">
        <Icon name="chevronLeft" className="ml-2.5" />
        <div className="ml-[37.2%] h-[27px] w-[53.5%] rounded-full bg-[#686868]" />
        <div className="flex-1" />
        <Icon name="chevronRight" className="mr-2.5" />
      </div>
      <Icon name="split" className="mr-[31px] ml-1.5" />
    </footer>
  );
}

function VerticalScroll() {
  return (
    <div className="flex w-[27px] shrink-0 flex-col items-center bg-[#4a4a4a] py-2.5 text-[#8c8c8c]">
      <Icon name="chevronUp" />
      <div className="h-[15%]" />
      <div className="w-[25px] flex-1 rounded-full bg-[#686868]" />
      <div className="h-[8%]" />
      <Icon name="chevronDown" />
    </div>
  );
}

function DocumentWindow() {
  return (
    <section className="flex min-w-0 flex-1 flex-col">
      <DocumentTabs />
      <div className="flex min-h-0 flex-1">
        <div className="flex min-w-0 flex-1 flex-col">
          <div className="flex">
            <svg width="28" height="28" viewBox="0 0 28 28" className="shrink-0 bg-[#1e1e1e]" aria-hidden="true">
              <path d="M1 8.5 H27 M8.5 0 V28" stroke="#aaa" strokeDasharray="2 2" />
              <path d="M27.5 0 V28 M0 27.5 H28" stroke="#9a9a9a" />
            </svg>
            <HorizontalRuler />
          </div>
          <div className="flex min-h-0 flex-1">
            <VerticalRuler />
            <Canvas />
          </div>
        </div>
        <VerticalScroll />
      </div>
      <StatusBar />
    </section>
  );
}

/* ---------- Docked icon columns ---------- */

const dockGroups: string[][] = [
  ["pages", "layers", "chain"],
  ["strokes", "palette", "swatches", "gradientTool", "fx"],
  ["alignLeft", "pathfinder"],
  ["character", "paragraph", "characterStyle", "paragraphStyle", "frameStyle"],
  ["scriptLabel", "scriptSettings", "script"],
  ["xframe", "article", "preflight"],
];

function DockGlyph({ name }: { name: string }) {
  switch (name) {
    case "palette":
      return <FaPalette size={30} className="-scale-x-100" />;
    case "fx":
      return <span className="text-[26px] italic">fx</span>;
    case "character":
      return <span className="flex items-center gap-0.5 text-[28px] leading-none font-bold">A<span className="h-7 w-[2px] bg-current" /></span>;
    case "paragraph":
      return <span className="text-[28px] leading-none font-bold">¶</span>;
    case "characterStyle":
    case "paragraphStyle":
      return (
        <span className="grid">
          <Icon name="stackLow" className="col-start-1 row-start-1" />
          <span className="col-start-1 row-start-1 justify-self-end text-2xl leading-none font-bold">{name === "characterStyle" ? "A" : "¶"}</span>
        </span>
      );
    case "scriptSettings":
      return (
        <span className="grid">
          <Icon name={name} className="col-start-1 row-start-1" />
          <FaCog size={18} className="col-start-1 row-start-1 self-end justify-self-end rounded-full bg-[#515151]" />
        </span>
      );
    default:
      return <Icon name={name} />;
  }
}

function Dock({ groups, className }: { groups: string[][]; className: string }) {
  return (
    <aside className={clsx("flex shrink-0 flex-col border-r-2 border-[#3a3a3a] bg-[#515151] text-[#c8c8c8]", className)}>
      <div className="flex h-[21px] items-center justify-end border-b-2 border-[#3a3a3a] bg-[#424242] pr-2.5"><Icon name="collapse" /></div>
      {groups.map((g, i) => (
        <div key={i} className="flex flex-col items-center border-b-2 border-[#3a3a3a] pt-[5px] pb-1 pl-[3px]">
          <Grip />
          <div className="mt-[3px] flex flex-col">
            {g.map((name) => (
              <button key={name} aria-label={name} className={clsx("flex h-[49px] w-12 items-center justify-center", name === "script" && "rounded border-y-5 border-[#515151] bg-[#303030]")}>
                <DockGlyph name={name} />
              </button>
            ))}
          </div>
          <div className="h-px" />
        </div>
      ))}
    </aside>
  );
}

/* ---------- Properties panel ---------- */

const Section = ({ title, className, children }: { title: string; className: string; children?: React.ReactNode }) => (
  <section className={clsx("border-b border-[#484848] pr-[38px] pl-[18px]", className)}>
    <h2 className="text-base leading-6 text-white">{title}</h2>
    {children}
  </section>
);

function Properties() {
  return (
    <aside className="flex w-[443px] shrink-0 flex-col border-r-2 border-[#3a3a3a] bg-[#515151] text-base text-[#c8c8c8]">
      <div className="flex h-[21px] shrink-0 items-center justify-end border-b-2 border-[#3a3a3a] bg-[#424242] pr-2"><Icon name="expand" /></div>
      <div className="flex h-[47px] shrink-0 bg-[#424242]">
        <button className="w-[135px] bg-[#515151] pt-[3px] text-[17px] font-bold text-white">Propriétés</button>
      </div>
      <Section title="Rectangle" className="pt-5 pb-[15px]" />
      <Section title="Transformation" className="pt-[19px] pb-3">
        <div className="mt-3 flex">
          <Icon name="refGrid" className="mt-5 ml-2.5" />
          <div className="ml-5 grid grid-cols-[30px_96px_45px_96px] items-center gap-y-2">
            <span className="text-[17px]">X :</span>
            <Field label="X" value="28 mm" />
            <span className="pr-2 text-right text-[17px]">l :</span>
            <Field label="Largeur" value="31,544 mm" />
            <span className="text-[17px]">Y :</span>
            <Field label="Y" value="122,5 mm" />
            <span className="pr-2 text-right text-[17px]">H :</span>
            <Field label="Hauteur" value="30 mm" />
          </div>
          <IconButton name="unlink" className="mt-[22px] ml-4" />
        </div>
        <div className="mt-4 -mr-2 flex h-6 items-center justify-end"><Icon name="dots" /></div>
      </Section>
      <Section title="Aspect" className="pt-[19px] pb-[15px]">
        <div className="mt-[13px] grid grid-cols-[48px_110px_122px_10px_95px] items-center gap-y-2.5">
          <button aria-label="Couleur de fond" className="h-[30px] w-[30px] border border-[#444] bg-[#cb1718]" />
          <span className="col-span-4 flex h-9 items-center text-white">Fond</span>
          <NoneSwatch className="h-[30px] w-[30px]" />
          <a href="#contour" className="justify-self-start border-b-2 border-[#b0b0b0] pr-2 leading-5">Contour</a>
          <Field label="Contour" value="0 pt" spin drop="chevronDown" />
          <span />
          <StrokeStyle kind="solid" className="w-[95px]" />
          <Icon name="cornerBlue" className="ml-0.5" />
          <a href="#angle" className="justify-self-start border-b-2 border-[#b0b0b0] pr-2 leading-5">Angle</a>
          <Field label="Angle" value="4,233 mm" spin />
          <span />
          <StrokeStyle kind="corner" className="w-[95px]" />
          <Icon name="opacity" className="ml-1" />
          <a href="#opacite" className="justify-self-start border-b-2 border-[#b0b0b0] pr-2 leading-5">Opacité</a>
          <Field label="Opacité" value="100 %" drop="chevronRight" />
        </div>
        <div className="mt-2.5 flex h-9 items-center gap-4 pl-1.5">
          <Icon name="effectFrame" />
          <span className="text-xl italic">fx<span className="text-xs">▾</span></span>
        </div>
      </Section>
      <Section title="Alignement" className="pt-5 pb-[13px]">
        <div className="mt-4 flex items-center">
          <IconButton name="alignTo" className="ml-2" />
          <div className="ml-3.5 h-9 w-px bg-[#454545]" />
          <div className="-ml-0.5 flex">
            {["alignLeft", "alignCenter", "alignRight", "alignTop", "alignMiddle", "alignBottom"].map((a) => (
              <IconButton key={a} name={a} className="w-14" />
            ))}
          </div>
        </div>
      </Section>
      <Section title="Habillage de texte" className="pt-5 pb-1.5">
        <div className="mt-3.5 flex h-[38px] items-center gap-3.5 pl-0.5">
          {["wrapNone", "wrapBox", "wrapShape", "wrapJump", "wrapNext"].map((wrap, i) => (
            <IconButton key={wrap} name={wrap} className={clsx("w-[38px]", i === 0 && "rounded bg-[#303030]")} />
          ))}
          <label className="ml-0.5 flex items-center gap-2.5 text-[#808080]">
            <input type="checkbox" disabled className="h-5 w-5 appearance-none rounded-[3px] border-2 border-[#777]" />
            Inverser
          </label>
        </div>
        <div className="mt-3 grid grid-cols-[36px_106px_110px_28px_105px] items-center gap-y-2.5">
          <Icon name="offTop" className="ml-1.5" />
          <Field label="Décalage haut" value="0 mm" spin muted />
          <button aria-label="Lier" className="row-span-2 flex h-10 w-10 items-center justify-center justify-self-center rounded bg-[#585858] text-[#8c8c8c]"><Icon name="link" /></button>
          <Icon name="offLeft" className="-ml-1" />
          <Field label="Décalage gauche" value="0 mm" spin muted />
          <Icon name="offBottom" className="ml-1.5" />
          <Field label="Décalage bas" value="0 mm" spin muted />
          <Icon name="offRight" className="-ml-1" />
          <Field label="Décalage droit" value="0 mm" spin muted />
        </div>
        <div className="mt-2.5 -mr-5 flex justify-end">
          <button aria-label="Options" className="flex h-[34px] w-[34px] items-center justify-center rounded bg-[#303030]"><Icon name="dots" /></button>
        </div>
      </Section>
      <section className="pt-[11px] pr-[38px] pl-[18px] text-white">
        <h2 className="leading-6">Sélections rapides</h2>
        <div className="mt-[15px] grid grid-cols-2 gap-x-[17px] gap-y-[18px]">
          <button className="h-9 rounded border-2 border-[#6e6e6e]">Organiser</button>
          <button className="h-9 rounded border-2 border-[#6e6e6e]">Verrouiller</button>
          <button className="col-span-2 h-9 rounded border-2 border-[#6e6e6e]">Convertir la forme</button>
        </div>
      </section>
    </aside>
  );
}

/* ---------- Floating scripts palette ---------- */

const folders = [
  { name: "Application", open: false },
  { name: "Communauté", open: false },
  { name: "Utilisateur", open: true },
];

function ScriptsPalette() {
  return (
    <div className="absolute top-[1012px] right-[515px] flex w-[423px] flex-col border-2 border-t-7 border-[#363636] bg-[#515151] text-base text-white shadow-md">
      <div className="flex h-[47px] border-b-2 border-[#3a3a3a] bg-[#424242] text-[17px] font-bold">
        <button className="w-[97px] overflow-hidden border-r-2 border-[#3c3c3c] pt-[3px] pl-5 text-left whitespace-nowrap text-[#a0a0a0]">Intitulé c</button>
        <button className="w-[97px] overflow-hidden pt-[3px] pl-[18px] text-left whitespace-nowrap text-[#a0a0a0]">Fusion d</button>
        <button className="flex w-[110px] items-center gap-2 bg-[#515151] pt-[3px] pl-2.5"><Icon name="updown" />Scripts</button>
        <div className="flex flex-1 items-center justify-end gap-3 pr-2.5 text-[#d0d0d0]">
          <svg width="16" height="12" viewBox="0 0 16 12" aria-hidden="true"><path d="M1 1 L6 6 L1 11 M9 1 L14 6 L9 11" {...line} /></svg>
          <span className="h-5 w-[2px] bg-[#808080]" />
          <Icon name="listMenu" />
        </div>
      </div>
      <ul className="pt-0.5">
        {folders.map((f) => (
          <li key={f.name} className="flex h-[38px] items-center border-b-2 border-[#585858] pt-[3px] text-[#c3c3c3]">
            <span className="flex w-12 justify-center"><Icon name={f.open ? "chevronDown" : "chevronRight"} /></span>
            <Icon name="folder" className="-ml-1" />
            <span className="ml-[9px] text-white">{f.name}</span>
          </li>
        ))}
        <li className="flex h-[38px] items-center bg-[#4f6781] pt-1 pl-20">
          <Icon name="scriptFile" className="text-[#c3c3c3]" />
          <span className="ml-[7px] text-[17px]">CALCULS_RAYNAUX_v3-06_FR.jsx</span>
        </li>
      </ul>
      <div className="h-[194px] border-b-2 border-[#585858]" />
      <div className="flex h-[42px] items-center justify-end pr-[38px]">
        <button aria-label="Infos" className="flex h-[21px] w-[21px] items-center justify-center rounded-full bg-[#d0d0d0] font-['Liberation_Serif'] text-lg leading-none font-bold text-[#404040]">i</button>
      </div>
      <div className="flex h-[15px] justify-center border-t-2 border-[#363636] pt-0.5"><Grip /></div>
    </div>
  );
}

export default function App() {
  return (
    <div className="relative flex h-screen w-full overflow-hidden border-b-2 border-[#3a3a3a] bg-[#515151] font-['Noto_Sans',sans-serif]">
      {/* sliver of the window behind */}
      <div className="flex w-[2px] shrink-0 flex-col">
        <div className="h-[27%] bg-[#505050]" />
        <div className="h-[1%] bg-[#1e1e1e]" />
        <div className="h-[10%] bg-[#c3cc28]" />
        <div className="flex-1 bg-[#e0e0e0]" />
      </div>
      <div className="flex min-w-0 flex-1 flex-col">
        <TitleBar />
        <ControlBar />
        <div className="flex min-h-0 flex-1">
          <Toolbox />
          <div className="w-[5px] shrink-0 border-x-2 border-[#3a3a3a] bg-[#454545]" />
          <DocumentWindow />
          <div className="w-1 shrink-0 bg-[#3e3e3e]" />
          <Dock groups={[["history"]]} className="w-[67px]" />
          <div className="w-[3px] shrink-0 bg-[#484848]" />
          <Dock groups={dockGroups} className="w-[67px]" />
          <div className="w-[3px] shrink-0 bg-[#3e3e3e]" />
          <Properties />
        </div>
      </div>
      <ScriptsPalette />
    </div>
  );
}
